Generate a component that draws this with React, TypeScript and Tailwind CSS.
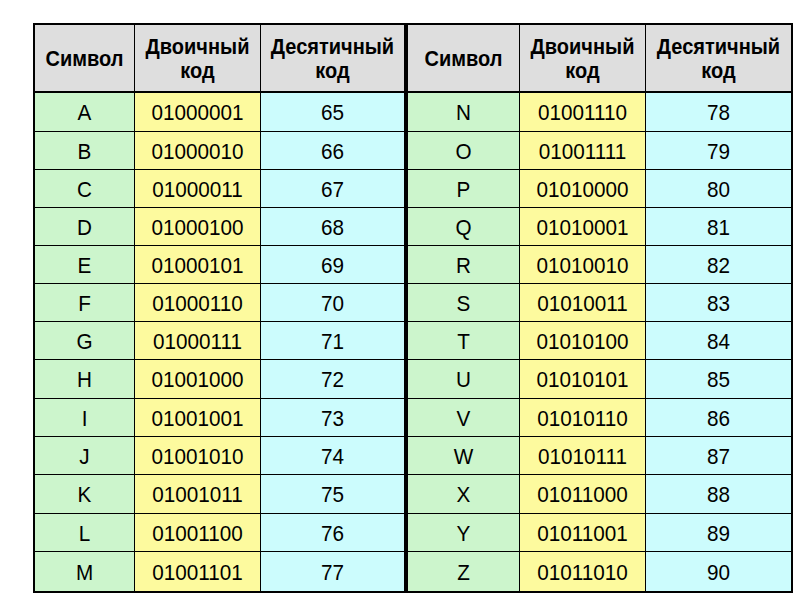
import React from "react";

const left = [
  ["A", "01000001", "65"],
  ["B", "01000010", "66"],
  ["C", "01000011", "67"],
  ["D", "01000100", "68"],
  ["E", "01000101", "69"],
  ["F", "01000110", "70"],
  ["G", "01000111", "71"],
  ["H", "01001000", "72"],
  ["I", "01001001", "73"],
  ["J", "01001010", "74"],
  ["K", "01001011", "75"],
  ["L", "01001100", "76"],
  ["M", "01001101", "77"],
];
const right = [
  ["N", "01001110", "78"],
  ["O", "01001111", "79"],
  ["P", "01010000", "80"],
  ["Q", "01010001", "81"],
  ["R", "01010010", "82"],
  ["S", "01010011", "83"],
  ["T", "01010100", "84"],
  ["U", "01010101", "85"],
  ["V", "01010110", "86"],
  ["W", "01010111", "87"],
  ["X", "01011000", "88"],
  ["Y", "01011001", "89"],
  ["Z", "01011010", "90"],
];

const heights = ["h-[39px]", "h-[38px]", "h-[38px]", "h-[38px]", "h-[38px]", "h-[38px]", "h-[38px]", "h-[39px]", "h-[38px]", "h-[38px]", "h-[39px]", "h-[38px]", "h-[39px]"];

function HeaderCells() {
  return (
    <>
      <div className="flex items-center justify-center">
        <span className="scale-y-[1.1]">Символ</span>
      </div>
      <div className="flex flex-col items-center justify-center border-l border-black leading-[24px]">
        <span className="scale-y-[1.1]">Двоичный</span>
        <span className="scale-y-[1.1]">код</span>
      </div>
      <div className="flex flex-col items-center justify-center border-l border-black leading-[24px]">
        <span className="scale-y-[1.1]">Десятичный</span>
        <span className="scale-y-[1.1]">код</span>
      </div>
    </>
  );
}

function DataCells({ r }: { r: string[] }) {
  return (
    <>
      <div className="flex items-center justify-center bg-[#ccf5cc]">
        <span className="scale-y-[1.1]">{r[0]}</span>
      </div>
      <div className="flex items-center justify-center border-l border-black bg-[#fdfa9e]">
        <span className="scale-y-[1.1]">{r[1]}</span>
      </div>
      <div className="flex items-center justify-center border-l border-black bg-[#ccfcfd]">
        <span className="scale-y-[1.1]">{r[2]}</span>
      </div>
    </>
  );
}

export default function App() {
  return (
    <div className="w-[800px] h-[600px] bg-white pt-[23px] pl-[33px]" style={{ fontFamily: '"Liberation Sans", Arial, sans-serif' }}>
      <div className="w-[760px] border-2 border-black text-black">
        <div className="flex h-[68px] border-b-2 border-black bg-[#dedede] text-[20px] font-bold">
          <div className="grid grid-cols-[99px_126px_144px] w-[369px]">
            <HeaderCells />
          </div>
          <div className="w-[4px] bg-black" />
          <div className="grid grid-cols-[111px_126px_146px] w-[383px]">
            <HeaderCells />
          </div>
        </div>
        {left.map((r, i) => (
          <div key={i} className={`flex text-[20.7px] ${heights[i]} ${i < 12 ? "border-b border-black" : ""}`}>
            <div className="grid grid-cols-[99px_126px_144px] w-[369px]">
              <DataCells r={r} />
            </div>
            <div className="w-[4px] bg-black" />
            <div className="grid grid-cols-[111px_126px_146px] w-[383px]">
              <DataCells r={right[i]} />
            </div>
          </div>
        ))}
      </div>
    </div>
  );
}
